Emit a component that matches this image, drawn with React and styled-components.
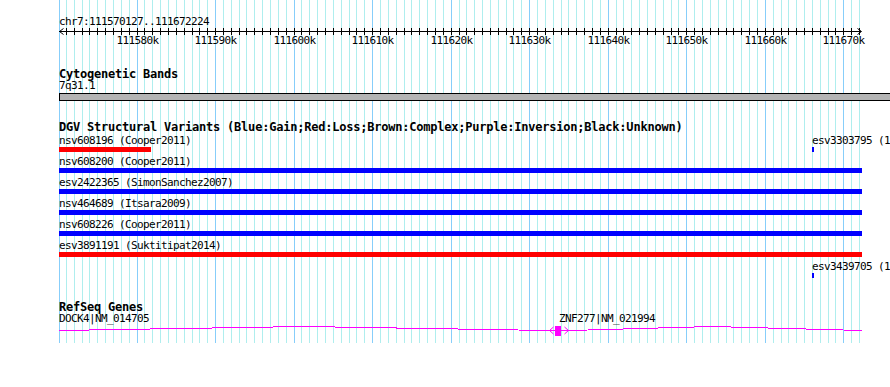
import React from "react";
import styled, { createGlobalStyle } from "styled-components";

const START = 111570127;
const X0 = 59;
const SCALE = 0.0078533;
const toX = (p) => Math.round(X0 + (p - START) * SCALE);
const MONO = '"DejaVu Sans Mono", "Liberation Mono", monospace';

const GlobalStyle = createGlobalStyle`
  html, body { margin: 0; padding: 0; background: #fff; }
`;

const Root = styled.div`
  position: relative;
  width: 890px;
  height: 387px;
  overflow: hidden;
  background: #ffffff;
`;

const GridSvg = styled.svg`
  position: absolute;
  top: 0;
  left: 0;
  z-index: 0;
`;

const Column = styled.div`
  position: relative;
  z-index: 1;
  width: 831px;
  padding-left: 59px;
  display: flex;
  flex-direction: column;
`;

const Label = styled.div`
  font-family: ${MONO};
  font-size: 11px;
  line-height: 11px;
  letter-spacing: -0.62px;
  color: #000;
  white-space: nowrap;
  margin-top: ${(p) => p.$mt || 0}px;
  margin-bottom: ${(p) => p.$mb || 0}px;
`;

const TrackTitle = styled.div`
  font-family: ${MONO};
  font-weight: bold;
  font-size: 12px;
  line-height: 11px;
  letter-spacing: -0.22px;
  color: #000;
  white-space: nowrap;
  margin-top: ${(p) => p.$mt || 0}px;
  margin-bottom: ${(p) => p.$mb || 0}px;
`;

const RulerSvg = styled.svg`
  display: block;
  overflow: visible;
`;

const BandBar = styled.div`
  height: 6px;
  border-top: 1px solid #000;
  border-bottom: 1px solid #000;
  border-left: 1px solid #000;
  background: #b4b4b4;
`;

const Lanes = styled.div`
  display: flex;
  flex-direction: column;
`;

const Lane = styled.div`
  position: relative;
  height: 21px;
`;

const Feature = styled.div`
  position: absolute;
  top: 0;
  display: flex;
  flex-direction: column;
`;

const VariantBar = styled.div`
  height: 5px;
  margin-top: 1px;
  background: ${(p) => (p.$kind === "loss" ? "#ff0000" : "#0000ff")};
`;

const GeneLane = styled.div`
  position: relative;
  height: 24px;
`;

const GeneLabel = styled(Label)`
  position: absolute;
  top: 0;
`;

const GeneSvg = styled.svg`
  position: absolute;
  top: 12px;
  left: 0;
`;

const ticks = [];
for (let k = 111571; k <= 111672; k++) {
  ticks.push({ pos: k * 1000, major: k % 10 === 0, x: toX(k * 1000) });
}

const lanes = [
  [
    { x: 59, w: 92, kind: "loss", label: "nsv608196 (Cooper2011)" },
    { x: 812, w: 2, kind: "gain", label: "esv3303795 (1" },
  ],
  [{ x: 59, w: 803, kind: "gain", label: "nsv608200 (Cooper2011)" }],
  [{ x: 59, w: 803, kind: "gain", label: "esv2422365 (SimonSanchez2007)" }],
  [{ x: 59, w: 803, kind: "gain", label: "nsv464689 (Itsara2009)" }],
  [{ x: 59, w: 803, kind: "gain", label: "nsv608226 (Cooper2011)" }],
  [{ x: 59, w: 803, kind: "loss", label: "esv3891191 (Suktitipat2014)" }],
  [{ x: 812, w: 2, kind: "gain", label: "esv3439705 (1" }],
];

function Grid() {
  return (
    <GridSvg width="890" height="343" shapeRendering="crispEdges">
      <line x1={X0 + 0.5} y1="0" x2={X0 + 0.5} y2="343" stroke="#87CEFA" />
      {ticks.map((t) => (
        <line
          key={t.pos}
          x1={t.x + 0.5}
          y1="0"
          x2={t.x + 0.5}
          y2="343"
          stroke={t.major ? "#87CEFA" : "#AFEEEE"}
        />
      ))}
    </GridSvg>
  );
}

function Ruler() {
  const o = X0;
  return (
    <RulerSvg width="831" height="22" shapeRendering="crispEdges">
      <line x1="0" y1="5.5" x2={861 - o} y2="5.5" stroke="#000" />
      <polyline
        points={`${4.5},2.5 0.5,5.5 ${4.5},8.5`}
        fill="none"
        stroke="#000"
        shapeRendering="auto"
      />
      <polyline
        points={`${857.5 - o},2.5 ${861.5 - o},5.5 ${857.5 - o},8.5`}
        fill="none"
        stroke="#000"
        shapeRendering="auto"
      />
      {ticks.map((t) => (
        <line
          key={t.pos}
          x1={t.x - o + 0.5}
          y1="2"
          x2={t.x - o + 0.5}
          y2="9"
          stroke="#000"
        />
      ))}
      {ticks
        .filter((t) => t.major)
        .map((t) => (
          <text
            key={"l" + t.pos}
            x={t.x - o + 0.5}
            y="18"
            textAnchor="middle"
            fill="#000"
            style={{
              fontFamily: MONO,
              fontSize: "11px",
              letterSpacing: "-0.62px",
            }}
          >
            {t.pos / 1000 + "k"}
          </text>
        ))}
    </RulerSvg>
  );
}

function Genes() {
  const o = X0;
  const y = (v) => v - 325;
  const mag = "#ff00ff";
  return (
    <GeneLane>
      <GeneLabel style={{ left: 0 }}>DOCK4|NM_014705</GeneLabel>
      <GeneLabel style={{ left: 500 }}>ZNF277|NM_021994</GeneLabel>
      <GeneSvg width="831" height="12" shapeRendering="crispEdges">
        <polyline
          points={`0,${y(330.5)} ${304 - o},${y(326.5)} ${549 - o},${y(330.5)}`}
          fill="none"
          stroke={mag}
        />
        <line x1={549 - o} y1={y(330.5)} x2={570 - o} y2={y(330.5)} stroke={mag} />
        <polyline
          points={`${553.5 - o},${y(327)} ${549.5 - o},${y(330.5)} ${553.5 - o},${y(334)}`}
          fill="none"
          stroke={mag}
          shapeRendering="auto"
        />
        <rect x={555 - o} y={y(326)} width="6" height="10" fill={mag} />
        <polyline
          points={`${564.5 - o},${y(327)} ${568.5 - o},${y(330.5)} ${564.5 - o},${y(334)}`}
          fill="none"
          stroke={mag}
          shapeRendering="auto"
        />
        <polyline
          points={`${570 - o},${y(330.5)} ${712 - o},${y(326.5)} ${862 - o},${y(330.5)}`}
          fill="none"
          stroke={mag}
        />
      </GeneSvg>
    </GeneLane>
  );
}

export default function App() {
  return (
    <Root>
      <GlobalStyle />
      <Grid />
      <Column>
        <Label $mt={16} $mb={-1}>
          chr7:111570127..111672224
        </Label>
        <Ruler />

        <TrackTitle $mt={21}>Cytogenetic Bands</TrackTitle>
        <Label $mb={2}>7q31.1</Label>
        <BandBar />

        <TrackTitle $mt={21} $mb={2}>
          DGV Structural Variants (Blue:Gain;Red:Loss;Brown:Complex;Purple:Inversion;Black:Unknown)
        </TrackTitle>
        <Lanes>
          {lanes.map((lane, i) => (
            <Lane key={i}>
              {lane.map((f) => (
                <Feature key={f.label} style={{ left: f.x - X0 }}>
                  <Label>{f.label}</Label>
                  <VariantBar $kind={f.kind} style={{ width: f.w }} />
                </Feature>
              ))}
            </Lane>
          ))}
        </Lanes>

        <TrackTitle $mt={20}>RefSeq Genes</TrackTitle>
        <Genes />
      </Column>
    </Root>
  );
}
